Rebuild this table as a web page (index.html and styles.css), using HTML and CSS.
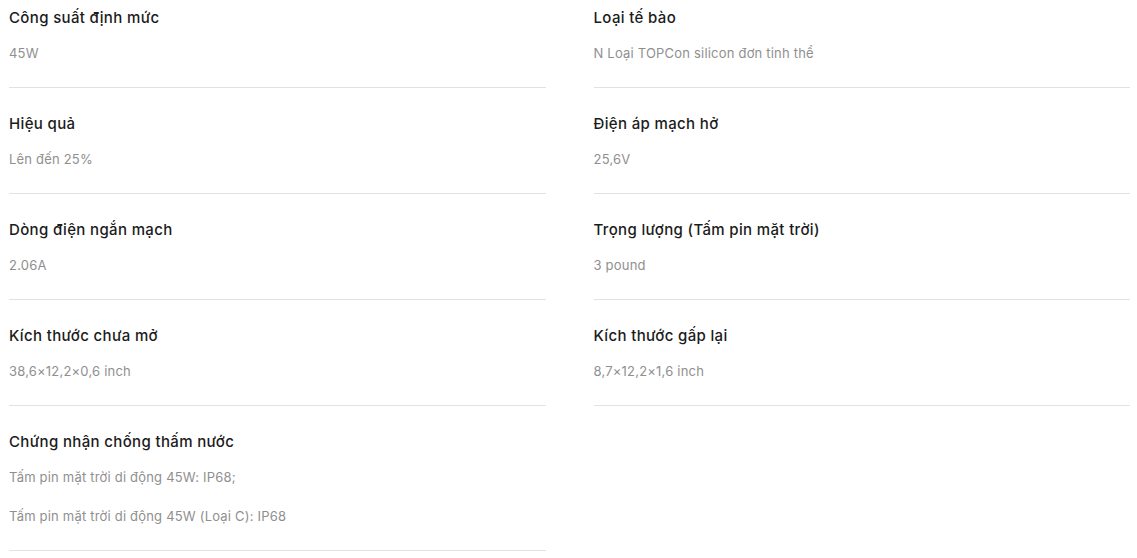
FILE: index.html
```html
<!DOCTYPE html>
<html lang="vi">
<head>
<meta charset="utf-8">
<title>Thông số kỹ thuật</title>
<link rel="stylesheet" href="styles.css">
</head>
<body>
<div class="specs">
  <div class="spec">
    <div class="spec-title">Công suất định mức</div>
    <div class="spec-value">45W</div>
  </div>
  <div class="spec">
    <div class="spec-title">Loại tế bào</div>
    <div class="spec-value">N Loại TOPCon silicon đơn tinh thể</div>
  </div>
  <div class="spec">
    <div class="spec-title">Hiệu quả</div>
    <div class="spec-value">Lên đến 25%</div>
  </div>
  <div class="spec">
    <div class="spec-title">Điện áp mạch hở</div>
    <div class="spec-value">25,6V</div>
  </div>
  <div class="spec">
    <div class="spec-title">Dòng điện ngắn mạch</div>
    <div class="spec-value">2.06A</div>
  </div>
  <div class="spec">
    <div class="spec-title">Trọng lượng (Tấm pin mặt trời)</div>
    <div class="spec-value">3 pound</div>
  </div>
  <div class="spec">
    <div class="spec-title">Kích thước chưa mở</div>
    <div class="spec-value">38,6×12,2×0,6 inch</div>
  </div>
  <div class="spec">
    <div class="spec-title">Kích thước gấp lại</div>
    <div class="spec-value">8,7×12,2×1,6 inch</div>
  </div>
  <div class="spec">
    <div class="spec-title">Chứng nhận chống thấm nước</div>
    <div class="spec-value">Tấm pin mặt trời di động 45W: IP68;</div>
    <div class="spec-value">Tấm pin mặt trời di động 45W (Loại C): IP68</div>
  </div>
</div>
</body>
</html>
```
FILE: styles.css
```css
html, body {
  margin: 0;
  padding: 0;
  background: #ffffff;
}
body {
  font-family: Inter, "Noto Sans", "Liberation Sans", sans-serif;
}
.specs {
  display: grid;
  grid-template-columns: 1fr 1fr;
  column-gap: 48px;
  row-gap: 26px;
  padding: 8px 7px 0 9px;
  align-items: start;
}
.spec {
  padding-bottom: 24px;
  border-bottom: 1px solid #e2e2e2;
}
.spec-title {
  font-size: 15px;
  line-height: 20px;
  font-weight: 500;
  letter-spacing: 0.35px;
  color: #1b1b1b;
}
.spec-value {
  margin-top: 15px;
  font-size: 13px;
  line-height: 20px;
  letter-spacing: 0.2px;
  color: #8f8f8f;
}
.spec-value + .spec-value {
  margin-top: 19px;
}
```
